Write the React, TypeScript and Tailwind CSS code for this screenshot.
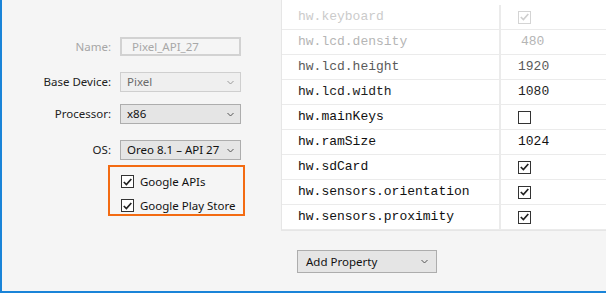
import React from 'react'

const ui = { fontFamily: '"Noto Sans", "Open Sans", sans-serif' }
const mono = { fontFamily: '"Liberation Mono", "Courier New", monospace' }

function Chevron({ light }: { light?: boolean }) {
    return (
        <svg width="7" height="5" viewBox="0 0 7 5" className="shrink-0">
            <path
                d="M0.5 1 L3.5 4 L6.5 1"
                fill="none"
                stroke={light ? '#9a9a9a' : '#555'}
                strokeWidth="1"
            />
        </svg>
    )
}

function Check({ checked, disabled }: { checked: boolean; disabled?: boolean }) {
    return (
        <span
            className={
                'flex h-[13px] w-[13px] items-center justify-center border bg-white ' +
                (disabled ? 'border-[#d4d4d4]' : 'border-[#333]')
            }
        >
            {checked && (
                <svg width="9" height="8" viewBox="0 0 9 8">
                    <path
                        d="M0.8 4 L3.4 6.6 L8.3 1"
                        fill="none"
                        stroke={disabled ? '#cfcfcf' : '#222'}
                        strokeWidth="1.7"
                    />
                </svg>
            )}
        </span>
    )
}

function Select({
    value,
    muted,
}: {
    value: string
    muted?: boolean
}) {
    return (
        <div
            className={
                'flex h-[20px] w-[121px] items-center justify-between pl-[6px] pr-[6px] border ' +
                (muted
                    ? 'border-[#cfcfcf] bg-[#efefef] text-[#6a6a6a]'
                    : 'border-[#adadad] bg-[#e5e5e5] text-[#111]')
            }
        >
            <span>{value}</span>
            <Chevron light={muted} />
        </div>
    )
}

function Field({
    label,
    labelMuted,
    children,
    className,
}: {
    label: string
    labelMuted?: boolean
    children: React.ReactNode
    className?: string
}) {
    return (
        <div className={'flex items-center ' + (className ?? '')}>
            <span
                className={
                    'w-[109px] text-right ' +
                    (labelMuted ? 'text-[#a6a6a6]' : 'text-[#222]')
                }
            >
                {label}
            </span>
            <div className="ml-[9px]">{children}</div>
        </div>
    )
}

const props: {
    name: string
    color: string
    value?: string
    check?: boolean
    disabled?: boolean
}[] = [
    { name: 'hw.keyboard', color: '#cbcbcb', check: true, disabled: true },
    { name: 'hw.lcd.density', color: '#b5b5b5', value: '480' },
    { name: 'hw.lcd.height', color: '#5a5a5a', value: '1920' },
    { name: 'hw.lcd.width', color: '#1e1e1e', value: '1080' },
    { name: 'hw.mainKeys', color: '#111', check: false },
    { name: 'hw.ramSize', color: '#111', value: '1024' },
    { name: 'hw.sdCard', color: '#111', check: true },
    { name: 'hw.sensors.orientation', color: '#111', check: true },
    { name: 'hw.sensors.proximity', color: '#111', check: true },
]

export default function App() {
    return (
        <div
            className="flex h-[293px] w-[606px] overflow-hidden border-b-2 border-l-2 border-[#1a84d8] bg-[#f5f5f5] text-[11.5px]"
            style={ui}
        >
            <div className="w-[279px] shrink-0 pt-[37px]">
                <Field label="Name:" labelMuted>
                    <div className="flex h-[19px] w-[121px] items-center border-2 border-[#d2d2d2] pl-[10px] text-[#a8a8a8]">
                        Pixel_API_27
                    </div>
                </Field>
                <Field label="Base Device:" className="mt-[16px]">
                    <Select value="Pixel" muted />
                </Field>
                <Field label="Processor:" className="mt-[12px]">
                    <Select value="x86" />
                </Field>
                <Field label="OS:" className="mt-[16px]">
                    <Select value="Oreo 8.1 – API 27" />
                </Field>
                <div className="ml-[106px] mt-[5px] flex h-[51px] w-[137px] flex-col gap-[7px] border-2 border-[#f36b12] pl-[11px] pt-[6px] text-[#111]">
                    <label className="flex items-center gap-[6px]">
                        <Check checked />
                        <span>Google APIs</span>
                    </label>
                    <label className="flex items-center gap-[6px]">
                        <Check checked />
                        <span>Google Play Store</span>
                    </label>
                </div>
            </div>

            <div className="flex flex-1 flex-col">
                <div className="border-b border-l border-[#e6e6e6] bg-white">
                    {props.map((p, i) => (
                        <div
                            key={p.name}
                            className={
                                'flex border-b border-[#ebebeb] ' +
                                (i === 0 ? 'h-[30px] pt-[5px]' : 'h-[25px]')
                            }
                        >
                            <div
                                className="flex w-[219px] items-center border-r-2 border-[#ebebeb] pl-[16px] text-[13px]"
                                style={{ ...mono, color: p.color }}
                            >
                                {p.name}
                            </div>
                            <div
                                className="flex flex-1 items-center pl-[17px] text-[13px]"
                                style={{ ...mono, color: p.color }}
                            >
                                {p.check !== undefined ? (
                                    <Check checked={p.check} disabled={p.disabled} />
                                ) : (
                                    <span className={i === 1 ? 'pl-[3px]' : ''}>{p.value}</span>
                                )}
                            </div>
                        </div>
                    ))}
                </div>
                <div className="ml-[16px] mt-[19px] flex h-[23px] w-[140px] items-center justify-between border border-[#adadad] bg-[#e5e5e5] pl-[8px] pr-[8px] text-[#111]">
                    <span>Add Property</span>
                    <Chevron />
                </div>
            </div>
        </div>
    )
}
